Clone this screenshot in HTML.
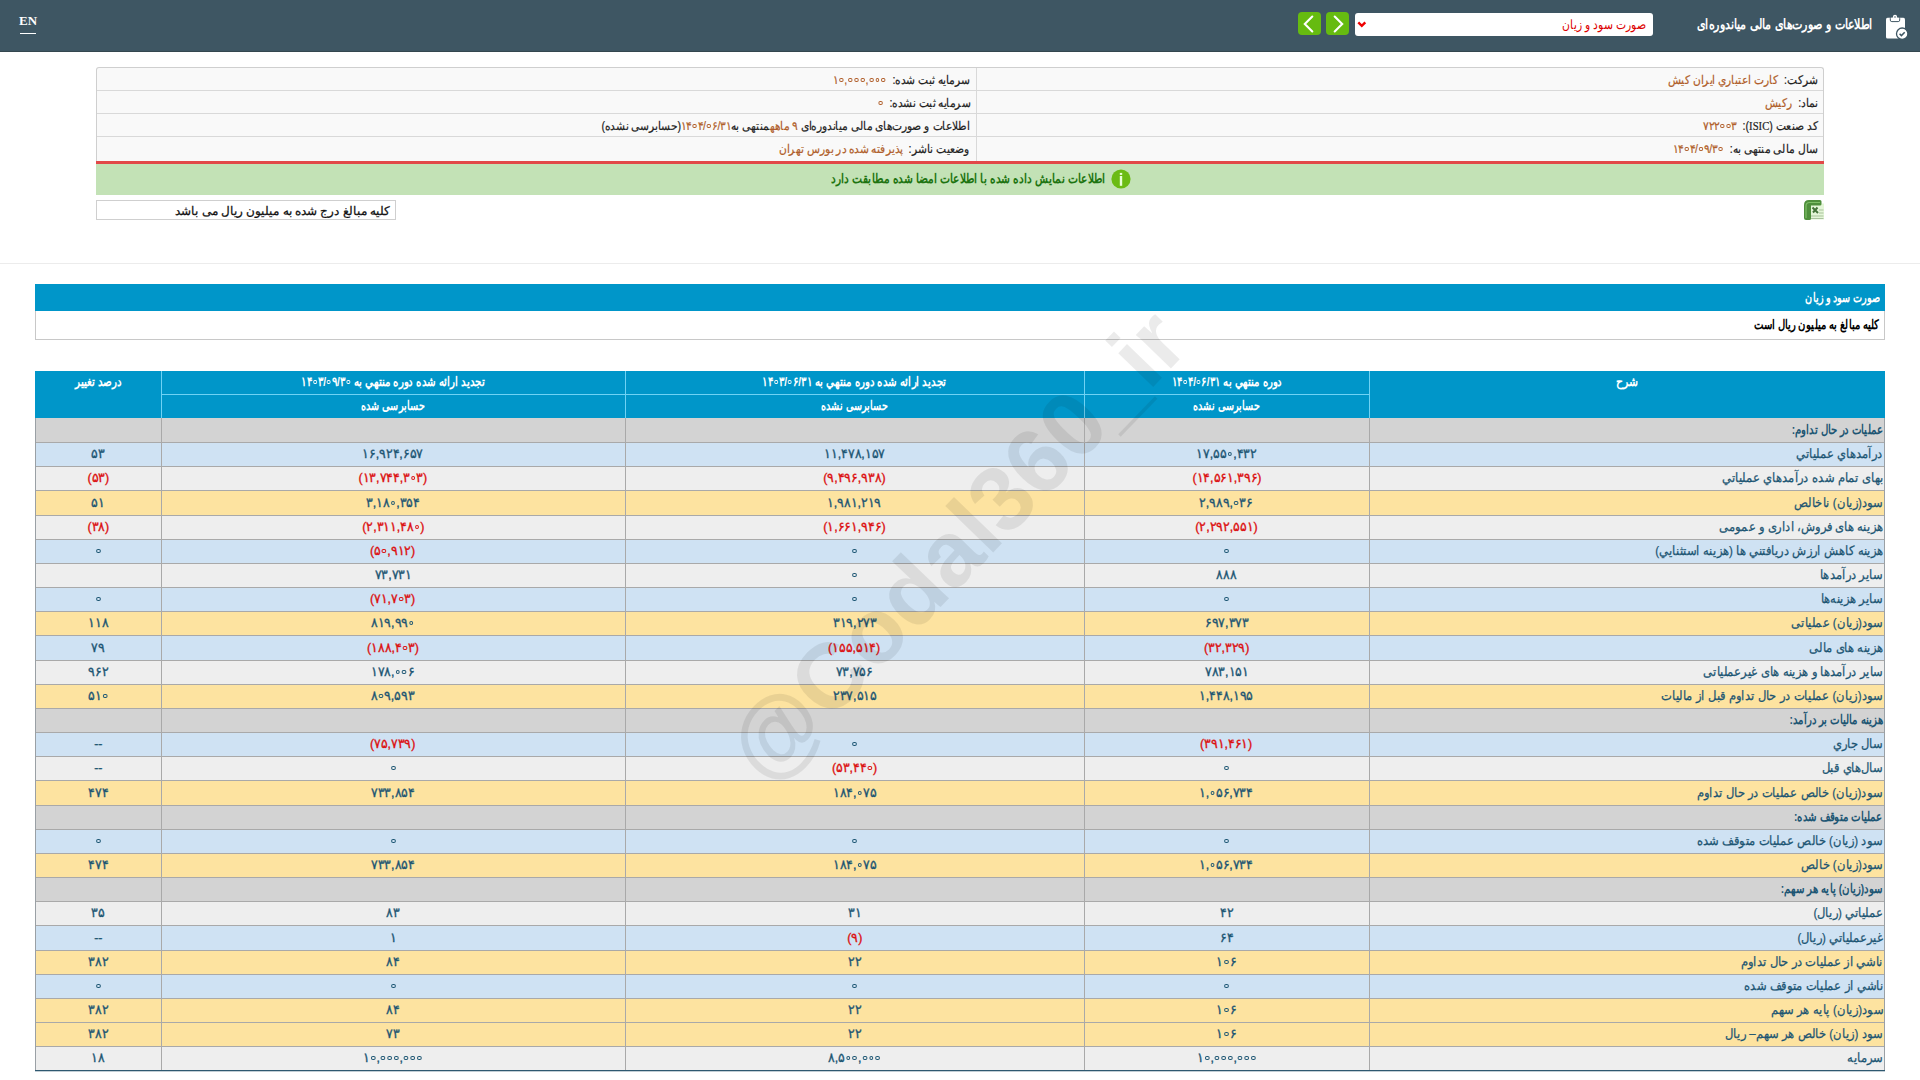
<!DOCTYPE html>
<html lang="fa" dir="rtl"><head><meta charset="utf-8"><title>Codal</title>
<style>
*{box-sizing:border-box;margin:0;padding:0}
html,body{width:1920px;height:1080px;overflow:hidden;background:#fff;font-family:"Liberation Sans",sans-serif;}
.a{position:absolute}
.sx{display:inline-block;white-space:nowrap}
.ltr{direction:ltr;unicode-bidi:isolate}
#hdr{position:absolute;left:0;top:0;width:1920px;height:52px;background:#3e5663;border-bottom:1px solid #34474f}
#en{position:absolute;left:19px;top:14px;color:#fff;font-family:"Liberation Serif",serif;font-weight:bold;font-size:13px;line-height:14px;direction:ltr}
#enl{position:absolute;left:20px;top:33px;width:16px;height:1px;background:#fff}
#ttl{position:absolute;right:47px;top:14px;color:#fff;font-weight:bold;font-size:14px;line-height:20px;white-space:nowrap}
#sel{position:absolute;left:1355px;top:13px;width:298px;height:23px;background:#fff;border-radius:3px}
#selt{position:absolute;right:7px;top:3px;color:#d00;font-size:13px;line-height:17px;white-space:nowrap}
.gb{position:absolute;top:12px;width:23px;height:23px;background:#66bb10;border-radius:4px}
#info{position:absolute;left:96px;top:67px;width:1728px;height:94px;background:#f9f9f9;border:1px solid #cfcfcf;border-bottom:0;border-radius:3px 3px 0 0}
.ir{position:absolute;left:0;width:1726px;height:1px;background:#d9d9d9}
.ivl{position:absolute;top:0;height:93px;left:879px;width:1px;background:#d9d9d9}
.it{position:absolute;font-size:12px;line-height:16px;color:#222;white-space:nowrap;-webkit-text-stroke:0.2px currentColor}
.it b{font-weight:normal;color:#b05e2a}
#red{position:absolute;left:96px;top:161px;width:1728px;height:3px;background:#e24848}
#grn{position:absolute;left:96px;top:164px;width:1728px;height:31px;background:#c3e2b6}
#grnt{position:absolute;left:0;width:1728px;top:6px;text-align:center;font-weight:bold;font-size:13px;line-height:18px;color:#1d7410;white-space:nowrap}
#note{position:absolute;left:96px;top:200px;width:300px;height:20px;border:1px solid #cfcfcf;background:#fff}
#notet{position:absolute;right:5px;top:2px;font-size:12px;line-height:16px;color:#111;white-space:nowrap;-webkit-text-stroke:0.25px currentColor}
#sep{position:absolute;left:0;top:263px;width:1920px;height:1px;background:#ececec}
#tbar{position:absolute;left:35px;top:284px;width:1850px;height:27px;background:#0096c9}
#tbart{position:absolute;right:5px;top:5px;color:#fff;font-weight:bold;font-size:13px;line-height:17px;white-space:nowrap}
#trow{position:absolute;left:35px;top:311px;width:1850px;height:29px;background:#fff;border:1px solid #c8c8c8;border-top:0}
#trowt{position:absolute;right:5px;top:5px;color:#000;font-weight:bold;font-size:13px;line-height:17px;white-space:nowrap}
#th{position:absolute;left:35px;top:371px;width:1850px;height:47px;background:#0096c9}
.hvl{position:absolute;width:1px;background:#6fd2f4;top:371px;height:47px}
.hhl{position:absolute;height:1px;background:#6fd2f4;top:394px}
.tht{position:absolute;color:#fff;font-weight:bold;font-size:13px;line-height:17px;text-align:center;white-space:nowrap}
.r{position:absolute;left:35px;width:1850px}
.hl{position:absolute;left:35px;width:1850px;height:1px;background:#a9a9a9}
.vl{position:absolute;width:1px;background:#a9a9a9}
.lab{position:absolute;right:37px;font-size:13px;color:#1d5673;white-space:nowrap;-webkit-text-stroke:0.25px currentColor}
.lab.sec{-webkit-text-stroke:0}
.lab.sec{font-weight:bold}
.num{position:absolute;font-size:13px;font-weight:normal;-webkit-text-stroke:0.35px currentColor;color:#1d5673;text-align:center;white-space:nowrap;direction:ltr}
.num.neg{color:#dc1010}
.z{display:inline-block;width:4.8px;height:4.5px;border:1.75px solid currentColor;border-radius:50%;margin:0 1px;vertical-align:2px}
#lb{position:absolute;left:35px;top:418px;width:1px;height:652px;background:#9aa0a5}
#rb{position:absolute;left:1884px;top:418px;width:1px;height:652px;background:#9aa0a5}
#bb{position:absolute;left:35px;top:1070px;width:1850px;height:1px;background:#2f5870}
#bb2{position:absolute;left:35px;top:1071px;width:1850px;height:1px;background:#c2ced5}
#wm{position:absolute;left:606px;top:490px;width:700px;height:110px;text-align:center;font-size:92px;line-height:110px;font-weight:bold;color:rgba(0,0,0,0.08);transform:rotate(-46deg);white-space:nowrap;direction:ltr}
</style></head>
<body>
<div id="hdr">
  <div id="en">EN</div><div id="enl"></div>
  <svg class="a" style="left:1884px;top:12px" width="26" height="30" viewBox="0 0 26 30">
    <rect x="2" y="5.8" width="19" height="20.7" rx="1.6" fill="#fff"/>
    <rect x="6.3" y="5" width="9.4" height="4.6" rx="1.5" fill="#fff" stroke="#3e5663" stroke-width="1"/>
    <circle cx="11" cy="4.9" r="2.1" fill="#fff"/>
    <circle cx="11" cy="5" r="0.75" fill="#3e5663"/>
    <circle cx="18.2" cy="21.7" r="5.7" fill="#fff" stroke="#3e5663" stroke-width="1.3"/>
    <path d="M15.6 21.8 l1.8 1.8 l3.3 -3.4" fill="none" stroke="#3e5663" stroke-width="1.5"/>
  </svg>
  <div id="ttl"><span class="sx" style="transform:scaleX(0.79);transform-origin:right center">اطلاعات و صورت‌های مالی میاندوره‌ای</span></div>
  <div id="sel"><div id="selt"><span class="sx" style="transform:scaleX(0.83);transform-origin:right center">صورت سود و زیان</span></div>
    <svg class="a" style="left:2px;top:8px" width="10" height="7" viewBox="0 0 10 7"><path d="M1.3 1.3 L4.8 4.8 L8.3 1.3" fill="none" stroke="#e00" stroke-width="2.4"/></svg>
  </div>
  <div class="gb" style="left:1298px"><svg width="23" height="23" viewBox="0 0 23 23"><path d="M14.3 4.6 L6.8 12 L14.3 19.4" fill="none" stroke="#fff" stroke-width="2.1" stroke-linecap="round"/></svg></div>
  <div class="gb" style="left:1326px"><svg width="23" height="23" viewBox="0 0 23 23"><path d="M8.7 4.6 L16.2 12 L8.7 19.4" fill="none" stroke="#fff" stroke-width="2.1" stroke-linecap="round"/></svg></div>
</div>

<div id="info">
  <div class="ir" style="top:22px"></div><div class="ir" style="top:45px"></div><div class="ir" style="top:68px"></div>
  <div class="ivl"></div>
  <div class="it" style="right:5px;top:4px"><span class="sx" style="transform:scaleX(0.89);transform-origin:right center">شرکت:&nbsp; <b>کارت اعتباري ايران کيش</b></span></div>
  <div class="it" style="right:5px;top:27px"><span class="sx" style="transform:scaleX(0.89);transform-origin:right center">نماد:&nbsp; <b>رکیش</b></span></div>
  <div class="it" style="right:5px;top:50px"><span class="sx" style="transform:scaleX(0.89);transform-origin:right center">کد صنعت (<span style="font-family:'Liberation Serif',serif">ISIC</span>):&nbsp; <b><span class="ltr">۷۲۲<i class="z"></i><i class="z"></i>۳</span></b></span></div>
  <div class="it" style="right:5px;top:73px"><span class="sx" style="transform:scaleX(0.89);transform-origin:right center">سال مالی منتهی به:&nbsp; <b><span class="ltr">۱۴<i class="z"></i>۴/<i class="z"></i>۹/۳<i class="z"></i></span></b></span></div>
  <div class="it" style="right:853px;top:4px"><span class="sx" style="transform:scaleX(0.89);transform-origin:right center">سرمایه ثبت شده:&nbsp; <b><span class="ltr">۱<i class="z"></i>,<i class="z"></i><i class="z"></i><i class="z"></i>,<i class="z"></i><i class="z"></i><i class="z"></i></span></b></span></div>
  <div class="it" style="right:853px;top:27px"><span class="sx" style="transform:scaleX(0.89);transform-origin:right center">سرمایه ثبت نشده:&nbsp; <b><span class="ltr"><i class="z"></i></span></b></span></div>
  <div class="it" style="right:853px;top:50px"><span class="sx" style="transform:scaleX(0.89);transform-origin:right center">اطلاعات و صورت‌های مالی میاندوره‌ای <b>۹ ماهه</b>منتهی به<b><span class="ltr">۱۴<i class="z"></i>۴/<i class="z"></i>۶/۳۱</span></b>(حسابرسی نشده)</span></div>
  <div class="it" style="right:853px;top:73px"><span class="sx" style="transform:scaleX(0.89);transform-origin:right center">وضعیت ناشر:&nbsp; <b>پذیرفته شده در بورس تهران</b></span></div>
</div>
<div id="red"></div>
<div id="grn">
  <svg class="a" style="left:1015px;top:5px" width="20" height="20" viewBox="0 0 20 20"><circle cx="10" cy="10" r="9.6" fill="#6bbb14"/><rect x="8.8" y="3.9" width="2.4" height="2" fill="#e8ffd8"/><rect x="8.8" y="7" width="2.4" height="9.8" fill="#e8ffd8"/></svg>
  <div id="grnt" style="left:0;width:1010px;text-align:right;right:auto"><span class="sx" style="transform:scaleX(0.815);transform-origin:right center">اطلاعات نمایش داده شده با اطلاعات امضا شده مطابقت دارد</span></div>
</div>
<div id="note"><div id="notet"><span class="sx" style="transform:scaleX(1.0);transform-origin:right center">کلیه مبالغ درج شده به میلیون ریال می باشد</span></div></div>
<svg class="a" style="left:1804px;top:200px" width="20" height="20" viewBox="0 0 20 20">
  <rect x="5" y="3.5" width="15" height="16" fill="#e4f6d8"/>
  <path d="M15 10 H19.5 M15 13 H19.5 M7 16 H19.5 M7 18.5 H19.5" stroke="#a9c29c" stroke-width="1"/>
  <path d="M0 18 L0 5 Q0 0 5 0 L16 0 Q17.5 0 17.5 1.5 L17.5 4 Q17.5 5.5 16 5.5 L7 5.5 L7 18.5 Q7 20 5.5 20 L2 20 Q0 20 0 18 Z" fill="#4f8f3c"/>
  <path d="M2 18 L2 6 Q2 2.5 5.5 2.5 L16 2.5" fill="none" stroke="#7fbf68" stroke-width="1.2"/>
  <path d="M8.5 7.5 L14 13 M13.5 7.5 L9 12.5" stroke="#45733a" stroke-width="2"/>
</svg>
<div id="sep"></div>
<div id="tbar"><div id="tbart"><span class="sx" style="transform:scaleX(0.74);transform-origin:right center">صورت سود و زیان</span></div></div>
<div id="trow"><div id="trowt"><span class="sx" style="transform:scaleX(0.77);transform-origin:right center">کلیه مبالغ به میلیون ریال است</span></div></div>

<div id="th"></div>
<div class="hvl" style="left:161px"></div><div class="hvl" style="left:625px"></div><div class="hvl" style="left:1084px"></div><div class="hvl" style="left:1369px"></div>
<div class="hhl" style="left:161px;width:1208px"></div>
<div class="tht" style="left:1369px;width:516px;top:373px"><span class="sx" style="transform:scaleX(0.83);transform-origin:center center">شرح</span></div>
<div class="tht" style="left:1084px;width:285px;top:373px"><span class="sx" style="transform:scaleX(0.78);transform-origin:center center">دوره منتهي به <span class="ltr">۱۴<i class="z"></i>۴/<i class="z"></i>۶/۳۱</span></span></div>
<div class="tht" style="left:1084px;width:285px;top:397px"><span class="sx" style="transform:scaleX(0.74);transform-origin:center center">حسابرسی نشده</span></div>
<div class="tht" style="left:625px;width:459px;top:373px"><span class="sx" style="transform:scaleX(0.79);transform-origin:center center">تجدید ارائه شده دوره منتهي به <span class="ltr">۱۴<i class="z"></i>۳/<i class="z"></i>۶/۳۱</span></span></div>
<div class="tht" style="left:625px;width:459px;top:397px"><span class="sx" style="transform:scaleX(0.74);transform-origin:center center">حسابرسی نشده</span></div>
<div class="tht" style="left:161px;width:464px;top:373px"><span class="sx" style="transform:scaleX(0.79);transform-origin:center center">تجدید ارائه شده دوره منتهي به <span class="ltr">۱۴<i class="z"></i>۳/<i class="z"></i>۹/۳<i class="z"></i></span></span></div>
<div class="tht" style="left:161px;width:464px;top:397px"><span class="sx" style="transform:scaleX(0.74);transform-origin:center center">حسابرسی شده</span></div>
<div class="tht" style="left:35px;width:126px;top:373px"><span class="sx" style="transform:scaleX(0.79);transform-origin:center center">درصد تغییر</span></div>

<div class="r" style="top:418px;height:24px;background:#d3d3d3"></div>
<div class="r" style="top:442px;height:24px;background:#cfe2f3"></div>
<div class="r" style="top:466px;height:24px;background:#eeeeee"></div>
<div class="r" style="top:490px;height:25px;background:#fde3a0"></div>
<div class="r" style="top:515px;height:24px;background:#eeeeee"></div>
<div class="r" style="top:539px;height:24px;background:#cfe2f3"></div>
<div class="r" style="top:563px;height:24px;background:#eeeeee"></div>
<div class="r" style="top:587px;height:24px;background:#cfe2f3"></div>
<div class="r" style="top:611px;height:24px;background:#fde3a0"></div>
<div class="r" style="top:635px;height:25px;background:#cfe2f3"></div>
<div class="r" style="top:660px;height:24px;background:#eeeeee"></div>
<div class="r" style="top:684px;height:24px;background:#fde3a0"></div>
<div class="r" style="top:708px;height:24px;background:#d3d3d3"></div>
<div class="r" style="top:732px;height:24px;background:#cfe2f3"></div>
<div class="r" style="top:756px;height:24px;background:#eeeeee"></div>
<div class="r" style="top:780px;height:25px;background:#fde3a0"></div>
<div class="r" style="top:805px;height:24px;background:#d3d3d3"></div>
<div class="r" style="top:829px;height:24px;background:#cfe2f3"></div>
<div class="r" style="top:853px;height:24px;background:#fde3a0"></div>
<div class="r" style="top:877px;height:24px;background:#d3d3d3"></div>
<div class="r" style="top:901px;height:24px;background:#eeeeee"></div>
<div class="r" style="top:925px;height:25px;background:#cfe2f3"></div>
<div class="r" style="top:950px;height:24px;background:#fde3a0"></div>
<div class="r" style="top:974px;height:24px;background:#cfe2f3"></div>
<div class="r" style="top:998px;height:24px;background:#fde3a0"></div>
<div class="r" style="top:1022px;height:24px;background:#fde3a0"></div>
<div class="r" style="top:1046px;height:24px;background:#eeeeee"></div>
<div class="hl" style="top:442px"></div>
<div class="hl" style="top:466px"></div>
<div class="hl" style="top:490px"></div>
<div class="hl" style="top:515px"></div>
<div class="hl" style="top:539px"></div>
<div class="hl" style="top:563px"></div>
<div class="hl" style="top:587px"></div>
<div class="hl" style="top:611px"></div>
<div class="hl" style="top:635px"></div>
<div class="hl" style="top:660px"></div>
<div class="hl" style="top:684px"></div>
<div class="hl" style="top:708px"></div>
<div class="hl" style="top:732px"></div>
<div class="hl" style="top:756px"></div>
<div class="hl" style="top:780px"></div>
<div class="hl" style="top:805px"></div>
<div class="hl" style="top:829px"></div>
<div class="hl" style="top:853px"></div>
<div class="hl" style="top:877px"></div>
<div class="hl" style="top:901px"></div>
<div class="hl" style="top:925px"></div>
<div class="hl" style="top:950px"></div>
<div class="hl" style="top:974px"></div>
<div class="hl" style="top:998px"></div>
<div class="hl" style="top:1022px"></div>
<div class="hl" style="top:1046px"></div>
<div class="vl" style="left:161px;top:418px;height:652px"></div>
<div class="vl" style="left:625px;top:418px;height:652px"></div>
<div class="vl" style="left:1084px;top:418px;height:652px"></div>
<div class="vl" style="left:1369px;top:418px;height:652px"></div>
<div class="lab sec" style="top:418px;height:24px;line-height:24px"><span class="sx" style="transform:scaleX(0.78);transform-origin:right center">عملیات در حال تداوم:</span></div>
<div class="lab" style="top:442px;height:24px;line-height:24px"><span class="sx" style="transform:scaleX(0.89);transform-origin:right center">درآمدهاي عملياتي</span></div>
<div class="num" style="top:442px;height:24px;line-height:24px;left:1084px;width:285px"><span class="sx" style="transform:scaleX(0.96);transform-origin:center center"><span class="ltr">۱۷,۵۵<i class="z"></i>,۴۳۲</span></span></div>
<div class="num" style="top:442px;height:24px;line-height:24px;left:625px;width:459px"><span class="sx" style="transform:scaleX(0.96);transform-origin:center center">۱۱,۴۷۸,۱۵۷</span></div>
<div class="num" style="top:442px;height:24px;line-height:24px;left:161px;width:464px"><span class="sx" style="transform:scaleX(0.96);transform-origin:center center">۱۶,۹۲۴,۶۵۷</span></div>
<div class="num" style="top:442px;height:24px;line-height:24px;left:35px;width:126px"><span class="sx" style="transform:scaleX(0.96);transform-origin:center center">۵۳</span></div>
<div class="lab" style="top:466px;height:24px;line-height:24px"><span class="sx" style="transform:scaleX(0.89);transform-origin:right center">بهای تمام شده درآمدهاي عملياتي</span></div>
<div class="num neg" style="top:466px;height:24px;line-height:24px;left:1084px;width:285px"><span class="sx" style="transform:scaleX(0.96);transform-origin:center center">(۱۴,۵۶۱,۳۹۶)</span></div>
<div class="num neg" style="top:466px;height:24px;line-height:24px;left:625px;width:459px"><span class="sx" style="transform:scaleX(0.96);transform-origin:center center">(۹,۴۹۶,۹۳۸)</span></div>
<div class="num neg" style="top:466px;height:24px;line-height:24px;left:161px;width:464px"><span class="sx" style="transform:scaleX(0.96);transform-origin:center center">(<span class="ltr">۱۳,۷۴۴,۳<i class="z"></i>۳</span>)</span></div>
<div class="num neg" style="top:466px;height:24px;line-height:24px;left:35px;width:126px"><span class="sx" style="transform:scaleX(0.96);transform-origin:center center">(۵۳)</span></div>
<div class="lab" style="top:490px;height:25px;line-height:25px"><span class="sx" style="transform:scaleX(0.89);transform-origin:right center">سود(زیان) ناخالص</span></div>
<div class="num" style="top:490px;height:25px;line-height:25px;left:1084px;width:285px"><span class="sx" style="transform:scaleX(0.96);transform-origin:center center"><span class="ltr">۲,۹۸۹,<i class="z"></i>۳۶</span></span></div>
<div class="num" style="top:490px;height:25px;line-height:25px;left:625px;width:459px"><span class="sx" style="transform:scaleX(0.96);transform-origin:center center">۱,۹۸۱,۲۱۹</span></div>
<div class="num" style="top:490px;height:25px;line-height:25px;left:161px;width:464px"><span class="sx" style="transform:scaleX(0.96);transform-origin:center center"><span class="ltr">۳,۱۸<i class="z"></i>,۳۵۴</span></span></div>
<div class="num" style="top:490px;height:25px;line-height:25px;left:35px;width:126px"><span class="sx" style="transform:scaleX(0.96);transform-origin:center center">۵۱</span></div>
<div class="lab" style="top:515px;height:24px;line-height:24px"><span class="sx" style="transform:scaleX(0.89);transform-origin:right center">هزینه های فروش، اداری و عمومی</span></div>
<div class="num neg" style="top:515px;height:24px;line-height:24px;left:1084px;width:285px"><span class="sx" style="transform:scaleX(0.96);transform-origin:center center">(۲,۲۹۲,۵۵۱)</span></div>
<div class="num neg" style="top:515px;height:24px;line-height:24px;left:625px;width:459px"><span class="sx" style="transform:scaleX(0.96);transform-origin:center center">(۱,۶۶۱,۹۴۶)</span></div>
<div class="num neg" style="top:515px;height:24px;line-height:24px;left:161px;width:464px"><span class="sx" style="transform:scaleX(0.96);transform-origin:center center">(<span class="ltr">۲,۳۱۱,۴۸<i class="z"></i></span>)</span></div>
<div class="num neg" style="top:515px;height:24px;line-height:24px;left:35px;width:126px"><span class="sx" style="transform:scaleX(0.96);transform-origin:center center">(۳۸)</span></div>
<div class="lab" style="top:539px;height:24px;line-height:24px"><span class="sx" style="transform:scaleX(0.89);transform-origin:right center">هزینه کاهش ارزش دریافتني ها (هزینه استثنايي)</span></div>
<div class="num" style="top:539px;height:24px;line-height:24px;left:1084px;width:285px"><span class="sx" style="transform:scaleX(0.96);transform-origin:center center"><span class="ltr"><i class="z"></i></span></span></div>
<div class="num" style="top:539px;height:24px;line-height:24px;left:625px;width:459px"><span class="sx" style="transform:scaleX(0.96);transform-origin:center center"><span class="ltr"><i class="z"></i></span></span></div>
<div class="num neg" style="top:539px;height:24px;line-height:24px;left:161px;width:464px"><span class="sx" style="transform:scaleX(0.96);transform-origin:center center">(<span class="ltr">۵<i class="z"></i>,۹۱۲</span>)</span></div>
<div class="num" style="top:539px;height:24px;line-height:24px;left:35px;width:126px"><span class="sx" style="transform:scaleX(0.96);transform-origin:center center"><span class="ltr"><i class="z"></i></span></span></div>
<div class="lab" style="top:563px;height:24px;line-height:24px"><span class="sx" style="transform:scaleX(0.89);transform-origin:right center">سایر درآمدها</span></div>
<div class="num" style="top:563px;height:24px;line-height:24px;left:1084px;width:285px"><span class="sx" style="transform:scaleX(0.96);transform-origin:center center">۸۸۸</span></div>
<div class="num" style="top:563px;height:24px;line-height:24px;left:625px;width:459px"><span class="sx" style="transform:scaleX(0.96);transform-origin:center center"><span class="ltr"><i class="z"></i></span></span></div>
<div class="num" style="top:563px;height:24px;line-height:24px;left:161px;width:464px"><span class="sx" style="transform:scaleX(0.96);transform-origin:center center">۷۳,۷۳۱</span></div>
<div class="lab" style="top:587px;height:24px;line-height:24px"><span class="sx" style="transform:scaleX(0.89);transform-origin:right center">سایر هزینه‌ها</span></div>
<div class="num" style="top:587px;height:24px;line-height:24px;left:1084px;width:285px"><span class="sx" style="transform:scaleX(0.96);transform-origin:center center"><span class="ltr"><i class="z"></i></span></span></div>
<div class="num" style="top:587px;height:24px;line-height:24px;left:625px;width:459px"><span class="sx" style="transform:scaleX(0.96);transform-origin:center center"><span class="ltr"><i class="z"></i></span></span></div>
<div class="num neg" style="top:587px;height:24px;line-height:24px;left:161px;width:464px"><span class="sx" style="transform:scaleX(0.96);transform-origin:center center">(<span class="ltr">۷۱,۷<i class="z"></i>۳</span>)</span></div>
<div class="num" style="top:587px;height:24px;line-height:24px;left:35px;width:126px"><span class="sx" style="transform:scaleX(0.96);transform-origin:center center"><span class="ltr"><i class="z"></i></span></span></div>
<div class="lab" style="top:611px;height:24px;line-height:24px"><span class="sx" style="transform:scaleX(0.89);transform-origin:right center">سود(زیان) عملیاتی</span></div>
<div class="num" style="top:611px;height:24px;line-height:24px;left:1084px;width:285px"><span class="sx" style="transform:scaleX(0.96);transform-origin:center center">۶۹۷,۳۷۳</span></div>
<div class="num" style="top:611px;height:24px;line-height:24px;left:625px;width:459px"><span class="sx" style="transform:scaleX(0.96);transform-origin:center center">۳۱۹,۲۷۳</span></div>
<div class="num" style="top:611px;height:24px;line-height:24px;left:161px;width:464px"><span class="sx" style="transform:scaleX(0.96);transform-origin:center center"><span class="ltr">۸۱۹,۹۹<i class="z"></i></span></span></div>
<div class="num" style="top:611px;height:24px;line-height:24px;left:35px;width:126px"><span class="sx" style="transform:scaleX(0.96);transform-origin:center center">۱۱۸</span></div>
<div class="lab" style="top:635px;height:25px;line-height:25px"><span class="sx" style="transform:scaleX(0.89);transform-origin:right center">هزینه های مالی</span></div>
<div class="num neg" style="top:635px;height:25px;line-height:25px;left:1084px;width:285px"><span class="sx" style="transform:scaleX(0.96);transform-origin:center center">(۳۲,۳۲۹)</span></div>
<div class="num neg" style="top:635px;height:25px;line-height:25px;left:625px;width:459px"><span class="sx" style="transform:scaleX(0.96);transform-origin:center center">(۱۵۵,۵۱۴)</span></div>
<div class="num neg" style="top:635px;height:25px;line-height:25px;left:161px;width:464px"><span class="sx" style="transform:scaleX(0.96);transform-origin:center center">(<span class="ltr">۱۸۸,۴<i class="z"></i>۳</span>)</span></div>
<div class="num" style="top:635px;height:25px;line-height:25px;left:35px;width:126px"><span class="sx" style="transform:scaleX(0.96);transform-origin:center center">۷۹</span></div>
<div class="lab" style="top:660px;height:24px;line-height:24px"><span class="sx" style="transform:scaleX(0.89);transform-origin:right center">سایر درآمدها و هزینه های غیرعملیاتی</span></div>
<div class="num" style="top:660px;height:24px;line-height:24px;left:1084px;width:285px"><span class="sx" style="transform:scaleX(0.96);transform-origin:center center">۷۸۳,۱۵۱</span></div>
<div class="num" style="top:660px;height:24px;line-height:24px;left:625px;width:459px"><span class="sx" style="transform:scaleX(0.96);transform-origin:center center">۷۳,۷۵۶</span></div>
<div class="num" style="top:660px;height:24px;line-height:24px;left:161px;width:464px"><span class="sx" style="transform:scaleX(0.96);transform-origin:center center"><span class="ltr">۱۷۸,<i class="z"></i><i class="z"></i>۶</span></span></div>
<div class="num" style="top:660px;height:24px;line-height:24px;left:35px;width:126px"><span class="sx" style="transform:scaleX(0.96);transform-origin:center center">۹۶۲</span></div>
<div class="lab" style="top:684px;height:24px;line-height:24px"><span class="sx" style="transform:scaleX(0.89);transform-origin:right center">سود(زیان) عملیات در حال تداوم قبل از مالیات</span></div>
<div class="num" style="top:684px;height:24px;line-height:24px;left:1084px;width:285px"><span class="sx" style="transform:scaleX(0.96);transform-origin:center center">۱,۴۴۸,۱۹۵</span></div>
<div class="num" style="top:684px;height:24px;line-height:24px;left:625px;width:459px"><span class="sx" style="transform:scaleX(0.96);transform-origin:center center">۲۳۷,۵۱۵</span></div>
<div class="num" style="top:684px;height:24px;line-height:24px;left:161px;width:464px"><span class="sx" style="transform:scaleX(0.96);transform-origin:center center"><span class="ltr">۸<i class="z"></i>۹,۵۹۳</span></span></div>
<div class="num" style="top:684px;height:24px;line-height:24px;left:35px;width:126px"><span class="sx" style="transform:scaleX(0.96);transform-origin:center center"><span class="ltr">۵۱<i class="z"></i></span></span></div>
<div class="lab sec" style="top:708px;height:24px;line-height:24px"><span class="sx" style="transform:scaleX(0.78);transform-origin:right center">هزینه مالیات بر درآمد:</span></div>
<div class="lab" style="top:732px;height:24px;line-height:24px"><span class="sx" style="transform:scaleX(0.89);transform-origin:right center">سال جاري</span></div>
<div class="num neg" style="top:732px;height:24px;line-height:24px;left:1084px;width:285px"><span class="sx" style="transform:scaleX(0.96);transform-origin:center center">(۳۹۱,۴۶۱)</span></div>
<div class="num" style="top:732px;height:24px;line-height:24px;left:625px;width:459px"><span class="sx" style="transform:scaleX(0.96);transform-origin:center center"><span class="ltr"><i class="z"></i></span></span></div>
<div class="num neg" style="top:732px;height:24px;line-height:24px;left:161px;width:464px"><span class="sx" style="transform:scaleX(0.96);transform-origin:center center">(۷۵,۷۳۹)</span></div>
<div class="num" style="top:732px;height:24px;line-height:24px;left:35px;width:126px"><span class="sx" style="transform:scaleX(0.96);transform-origin:center center">--</span></div>
<div class="lab" style="top:756px;height:24px;line-height:24px"><span class="sx" style="transform:scaleX(0.89);transform-origin:right center">سال‌هاي قبل</span></div>
<div class="num" style="top:756px;height:24px;line-height:24px;left:1084px;width:285px"><span class="sx" style="transform:scaleX(0.96);transform-origin:center center"><span class="ltr"><i class="z"></i></span></span></div>
<div class="num neg" style="top:756px;height:24px;line-height:24px;left:625px;width:459px"><span class="sx" style="transform:scaleX(0.96);transform-origin:center center">(<span class="ltr">۵۳,۴۴<i class="z"></i></span>)</span></div>
<div class="num" style="top:756px;height:24px;line-height:24px;left:161px;width:464px"><span class="sx" style="transform:scaleX(0.96);transform-origin:center center"><span class="ltr"><i class="z"></i></span></span></div>
<div class="num" style="top:756px;height:24px;line-height:24px;left:35px;width:126px"><span class="sx" style="transform:scaleX(0.96);transform-origin:center center">--</span></div>
<div class="lab" style="top:780px;height:25px;line-height:25px"><span class="sx" style="transform:scaleX(0.89);transform-origin:right center">سود(زیان) خالص عملیات در حال تداوم</span></div>
<div class="num" style="top:780px;height:25px;line-height:25px;left:1084px;width:285px"><span class="sx" style="transform:scaleX(0.96);transform-origin:center center"><span class="ltr">۱,<i class="z"></i>۵۶,۷۳۴</span></span></div>
<div class="num" style="top:780px;height:25px;line-height:25px;left:625px;width:459px"><span class="sx" style="transform:scaleX(0.96);transform-origin:center center"><span class="ltr">۱۸۴,<i class="z"></i>۷۵</span></span></div>
<div class="num" style="top:780px;height:25px;line-height:25px;left:161px;width:464px"><span class="sx" style="transform:scaleX(0.96);transform-origin:center center">۷۳۳,۸۵۴</span></div>
<div class="num" style="top:780px;height:25px;line-height:25px;left:35px;width:126px"><span class="sx" style="transform:scaleX(0.96);transform-origin:center center">۴۷۴</span></div>
<div class="lab sec" style="top:805px;height:24px;line-height:24px"><span class="sx" style="transform:scaleX(0.78);transform-origin:right center">عملیات متوقف شده:</span></div>
<div class="lab" style="top:829px;height:24px;line-height:24px"><span class="sx" style="transform:scaleX(0.89);transform-origin:right center">سود (زیان) خالص عملیات متوقف شده</span></div>
<div class="num" style="top:829px;height:24px;line-height:24px;left:1084px;width:285px"><span class="sx" style="transform:scaleX(0.96);transform-origin:center center"><span class="ltr"><i class="z"></i></span></span></div>
<div class="num" style="top:829px;height:24px;line-height:24px;left:625px;width:459px"><span class="sx" style="transform:scaleX(0.96);transform-origin:center center"><span class="ltr"><i class="z"></i></span></span></div>
<div class="num" style="top:829px;height:24px;line-height:24px;left:161px;width:464px"><span class="sx" style="transform:scaleX(0.96);transform-origin:center center"><span class="ltr"><i class="z"></i></span></span></div>
<div class="num" style="top:829px;height:24px;line-height:24px;left:35px;width:126px"><span class="sx" style="transform:scaleX(0.96);transform-origin:center center"><span class="ltr"><i class="z"></i></span></span></div>
<div class="lab" style="top:853px;height:24px;line-height:24px"><span class="sx" style="transform:scaleX(0.89);transform-origin:right center">سود(زیان) خالص</span></div>
<div class="num" style="top:853px;height:24px;line-height:24px;left:1084px;width:285px"><span class="sx" style="transform:scaleX(0.96);transform-origin:center center"><span class="ltr">۱,<i class="z"></i>۵۶,۷۳۴</span></span></div>
<div class="num" style="top:853px;height:24px;line-height:24px;left:625px;width:459px"><span class="sx" style="transform:scaleX(0.96);transform-origin:center center"><span class="ltr">۱۸۴,<i class="z"></i>۷۵</span></span></div>
<div class="num" style="top:853px;height:24px;line-height:24px;left:161px;width:464px"><span class="sx" style="transform:scaleX(0.96);transform-origin:center center">۷۳۳,۸۵۴</span></div>
<div class="num" style="top:853px;height:24px;line-height:24px;left:35px;width:126px"><span class="sx" style="transform:scaleX(0.96);transform-origin:center center">۴۷۴</span></div>
<div class="lab sec" style="top:877px;height:24px;line-height:24px"><span class="sx" style="transform:scaleX(0.78);transform-origin:right center">سود(زیان) پایه هر سهم:</span></div>
<div class="lab" style="top:901px;height:24px;line-height:24px"><span class="sx" style="transform:scaleX(0.89);transform-origin:right center">عملیاتي (ریال)</span></div>
<div class="num" style="top:901px;height:24px;line-height:24px;left:1084px;width:285px"><span class="sx" style="transform:scaleX(0.96);transform-origin:center center">۴۲</span></div>
<div class="num" style="top:901px;height:24px;line-height:24px;left:625px;width:459px"><span class="sx" style="transform:scaleX(0.96);transform-origin:center center">۳۱</span></div>
<div class="num" style="top:901px;height:24px;line-height:24px;left:161px;width:464px"><span class="sx" style="transform:scaleX(0.96);transform-origin:center center">۸۳</span></div>
<div class="num" style="top:901px;height:24px;line-height:24px;left:35px;width:126px"><span class="sx" style="transform:scaleX(0.96);transform-origin:center center">۳۵</span></div>
<div class="lab" style="top:925px;height:25px;line-height:25px"><span class="sx" style="transform:scaleX(0.89);transform-origin:right center">غیرعملیاتي (ریال)</span></div>
<div class="num" style="top:925px;height:25px;line-height:25px;left:1084px;width:285px"><span class="sx" style="transform:scaleX(0.96);transform-origin:center center">۶۴</span></div>
<div class="num neg" style="top:925px;height:25px;line-height:25px;left:625px;width:459px"><span class="sx" style="transform:scaleX(0.96);transform-origin:center center">(۹)</span></div>
<div class="num" style="top:925px;height:25px;line-height:25px;left:161px;width:464px"><span class="sx" style="transform:scaleX(0.96);transform-origin:center center">۱</span></div>
<div class="num" style="top:925px;height:25px;line-height:25px;left:35px;width:126px"><span class="sx" style="transform:scaleX(0.96);transform-origin:center center">--</span></div>
<div class="lab" style="top:950px;height:24px;line-height:24px"><span class="sx" style="transform:scaleX(0.89);transform-origin:right center">ناشي از عملیات در حال تداوم</span></div>
<div class="num" style="top:950px;height:24px;line-height:24px;left:1084px;width:285px"><span class="sx" style="transform:scaleX(0.96);transform-origin:center center"><span class="ltr">۱<i class="z"></i>۶</span></span></div>
<div class="num" style="top:950px;height:24px;line-height:24px;left:625px;width:459px"><span class="sx" style="transform:scaleX(0.96);transform-origin:center center">۲۲</span></div>
<div class="num" style="top:950px;height:24px;line-height:24px;left:161px;width:464px"><span class="sx" style="transform:scaleX(0.96);transform-origin:center center">۸۴</span></div>
<div class="num" style="top:950px;height:24px;line-height:24px;left:35px;width:126px"><span class="sx" style="transform:scaleX(0.96);transform-origin:center center">۳۸۲</span></div>
<div class="lab" style="top:974px;height:24px;line-height:24px"><span class="sx" style="transform:scaleX(0.89);transform-origin:right center">ناشي از عملیات متوقف شده</span></div>
<div class="num" style="top:974px;height:24px;line-height:24px;left:1084px;width:285px"><span class="sx" style="transform:scaleX(0.96);transform-origin:center center"><span class="ltr"><i class="z"></i></span></span></div>
<div class="num" style="top:974px;height:24px;line-height:24px;left:625px;width:459px"><span class="sx" style="transform:scaleX(0.96);transform-origin:center center"><span class="ltr"><i class="z"></i></span></span></div>
<div class="num" style="top:974px;height:24px;line-height:24px;left:161px;width:464px"><span class="sx" style="transform:scaleX(0.96);transform-origin:center center"><span class="ltr"><i class="z"></i></span></span></div>
<div class="num" style="top:974px;height:24px;line-height:24px;left:35px;width:126px"><span class="sx" style="transform:scaleX(0.96);transform-origin:center center"><span class="ltr"><i class="z"></i></span></span></div>
<div class="lab" style="top:998px;height:24px;line-height:24px"><span class="sx" style="transform:scaleX(0.89);transform-origin:right center">سود(زیان) پایه هر سهم</span></div>
<div class="num" style="top:998px;height:24px;line-height:24px;left:1084px;width:285px"><span class="sx" style="transform:scaleX(0.96);transform-origin:center center"><span class="ltr">۱<i class="z"></i>۶</span></span></div>
<div class="num" style="top:998px;height:24px;line-height:24px;left:625px;width:459px"><span class="sx" style="transform:scaleX(0.96);transform-origin:center center">۲۲</span></div>
<div class="num" style="top:998px;height:24px;line-height:24px;left:161px;width:464px"><span class="sx" style="transform:scaleX(0.96);transform-origin:center center">۸۴</span></div>
<div class="num" style="top:998px;height:24px;line-height:24px;left:35px;width:126px"><span class="sx" style="transform:scaleX(0.96);transform-origin:center center">۳۸۲</span></div>
<div class="lab" style="top:1022px;height:24px;line-height:24px"><span class="sx" style="transform:scaleX(0.89);transform-origin:right center">سود (زیان) خالص هر سهم– ریال</span></div>
<div class="num" style="top:1022px;height:24px;line-height:24px;left:1084px;width:285px"><span class="sx" style="transform:scaleX(0.96);transform-origin:center center"><span class="ltr">۱<i class="z"></i>۶</span></span></div>
<div class="num" style="top:1022px;height:24px;line-height:24px;left:625px;width:459px"><span class="sx" style="transform:scaleX(0.96);transform-origin:center center">۲۲</span></div>
<div class="num" style="top:1022px;height:24px;line-height:24px;left:161px;width:464px"><span class="sx" style="transform:scaleX(0.96);transform-origin:center center">۷۳</span></div>
<div class="num" style="top:1022px;height:24px;line-height:24px;left:35px;width:126px"><span class="sx" style="transform:scaleX(0.96);transform-origin:center center">۳۸۲</span></div>
<div class="lab" style="top:1046px;height:24px;line-height:24px"><span class="sx" style="transform:scaleX(0.89);transform-origin:right center">سرمایه</span></div>
<div class="num" style="top:1046px;height:24px;line-height:24px;left:1084px;width:285px"><span class="sx" style="transform:scaleX(0.96);transform-origin:center center"><span class="ltr">۱<i class="z"></i>,<i class="z"></i><i class="z"></i><i class="z"></i>,<i class="z"></i><i class="z"></i><i class="z"></i></span></span></div>
<div class="num" style="top:1046px;height:24px;line-height:24px;left:625px;width:459px"><span class="sx" style="transform:scaleX(0.96);transform-origin:center center"><span class="ltr">۸,۵<i class="z"></i><i class="z"></i>,<i class="z"></i><i class="z"></i><i class="z"></i></span></span></div>
<div class="num" style="top:1046px;height:24px;line-height:24px;left:161px;width:464px"><span class="sx" style="transform:scaleX(0.96);transform-origin:center center"><span class="ltr">۱<i class="z"></i>,<i class="z"></i><i class="z"></i><i class="z"></i>,<i class="z"></i><i class="z"></i><i class="z"></i></span></span></div>
<div class="num" style="top:1046px;height:24px;line-height:24px;left:35px;width:126px"><span class="sx" style="transform:scaleX(0.96);transform-origin:center center">۱۸</span></div>
<div id="lb"></div><div id="rb"></div><div id="bb"></div><div id="bb2"></div>
<div id="wm">@Codal360_ir</div>
</body></html>
